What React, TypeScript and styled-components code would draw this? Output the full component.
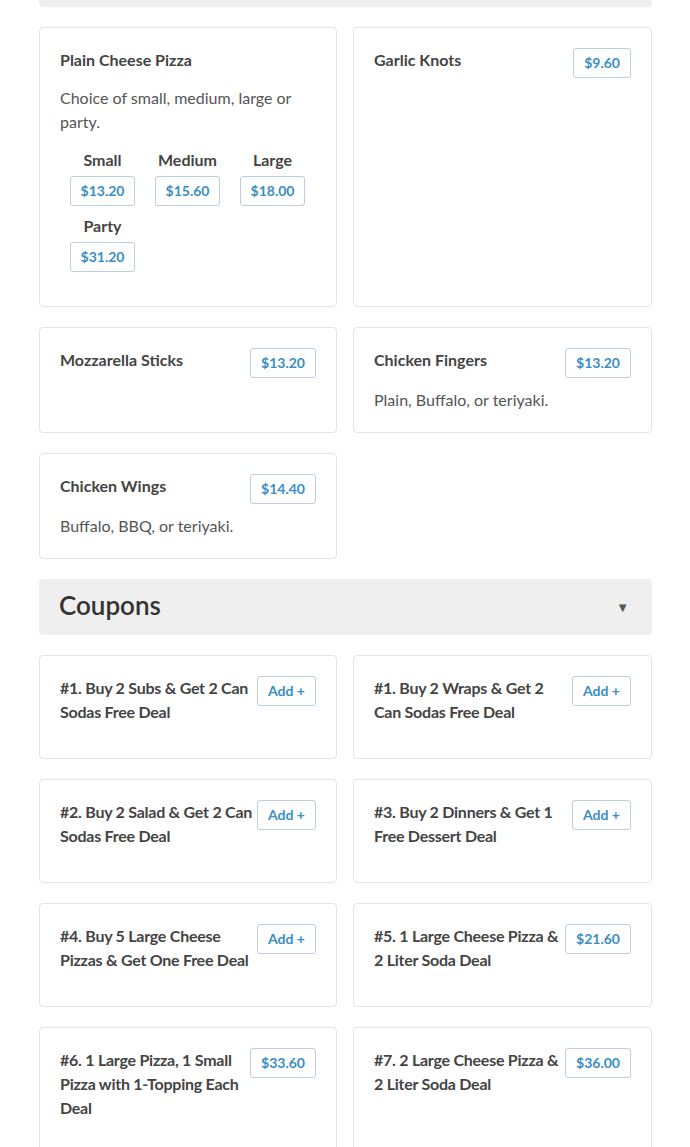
import React from "react";
import styled, { createGlobalStyle } from "styled-components";

const Global = createGlobalStyle`
  html, body { margin: 0; padding: 0; background: #fff; }
  body { font-family: Lato, "Open Sans", "Liberation Sans", sans-serif; color: #444; }
  * { box-sizing: border-box; }
`;

const Page = styled.div`
  padding: 0 38px 0 39px;
  margin-top: -49px;
`;

const Section = styled.section`
  margin-bottom: 20px;
`;

const SectionHeader = styled.div`
  display: flex;
  align-items: center;
  justify-content: space-between;
  height: 56px;
  padding: 0 23px 0 20px;
  background: #efefef;
  border-radius: 4px;
  margin-bottom: 20px;
`;

const SectionTitle = styled.h2`
  margin: 0 0 4px;
  font-size: 26px;
  font-weight: 600;
  color: #333;
  line-height: 30px;
`;

const Caret = styled.span`
  font-size: 13px;
  color: #555;
  line-height: 1;
`;

const Grid = styled.div`
  display: grid;
  grid-template-columns: 298px 299px;
  column-gap: 16px;
  row-gap: 20px;
`;

const Card = styled.div`
  border: 1px solid #e4e4e4;
  border-radius: 4px;
  padding: 20px;
  background: #fff;
`;

const CardHead = styled.div`
  display: flex;
  align-items: flex-start;
  justify-content: space-between;
  gap: 1px;
`;

const ItemTitle = styled.h3<{ $tight?: boolean }>`
  margin: 0 0 14px;
  font-size: 16px;
  font-weight: 700;
  line-height: 24px;
  color: #444;
  flex: 1;
  letter-spacing: ${(p) => (p.$tight ? "-0.25px" : "0")};
`;

const PriceButton = styled.button`
  flex: none;
  height: 30px;
  padding: 0 10px;
  margin: 0 0 10px;
  border: 1px solid #b9cfdd;
  border-radius: 3px;
  background: #fff;
  color: #3a8ec5;
  font-family: Lato, "Open Sans", "Liberation Sans", sans-serif;
  font-size: 14px;
  font-weight: 700;
  line-height: 28px;
  cursor: pointer;
`;

const Description = styled.p`
  margin: 0;
  font-size: 16px;
  line-height: 24px;
  color: #555;
`;

const Sizes = styled.div`
  display: flex;
  flex-wrap: wrap;
  row-gap: 8px;
  margin-top: 14px;
  padding-bottom: 14px;
`;

const SizeOption = styled.div`
  width: 85px;
  display: flex;
  flex-direction: column;
  align-items: center;
  gap: 4px;
`;

const SizeLabel = styled.span`
  font-size: 16px;
  font-weight: 700;
  line-height: 24px;
  color: #444;
`;

const SizeButton = styled(PriceButton)`
  margin: 0;
`;

type Item = { title: string; price?: string; desc?: string; sizes?: [string, string][] };

const menuItems: Item[] = [
  {
    title: "Plain Cheese Pizza",
    desc: "Choice of small, medium, large or party.",
    sizes: [
      ["Small", "$13.20"],
      ["Medium", "$15.60"],
      ["Large", "$18.00"],
      ["Party", "$31.20"],
    ],
  },
  { title: "Garlic Knots", price: "$9.60" },
  { title: "Mozzarella Sticks", price: "$13.20" },
  { title: "Chicken Fingers", price: "$13.20", desc: "Plain, Buffalo, or teriyaki." },
  { title: "Chicken Wings", price: "$14.40", desc: "Buffalo, BBQ, or teriyaki." },
];

const coupons: Item[] = [
  { title: "#1. Buy 2 Subs & Get 2 Can Sodas Free Deal", price: "Add +" },
  { title: "#1. Buy 2 Wraps & Get 2 Can Sodas Free Deal", price: "Add +" },
  { title: "#2. Buy 2 Salad & Get 2 Can Sodas Free Deal", price: "Add +" },
  { title: "#3. Buy 2 Dinners & Get 1 Free Dessert Deal", price: "Add +" },
  { title: "#4. Buy 5 Large Cheese Pizzas & Get One Free Deal", price: "Add +" },
  { title: "#5. 1 Large Cheese Pizza & 2 Liter Soda Deal", price: "$21.60" },
  { title: "#6. 1 Large Pizza, 1 Small Pizza with 1-Topping Each Deal", price: "$33.60" },
  { title: "#7. 2 Large Cheese Pizza & 2 Liter Soda Deal", price: "$36.00" },
];

function ItemCard({ item, tight }: { item: Item; tight?: boolean }) {
  return (
    <Card>
      <CardHead>
        <ItemTitle $tight={tight}>{item.title}</ItemTitle>
        {item.price && <PriceButton>{item.price}</PriceButton>}
      </CardHead>
      {item.desc && <Description>{item.desc}</Description>}
      {item.sizes && (
        <Sizes>
          {item.sizes.map(([label, price]) => (
            <SizeOption key={label}>
              <SizeLabel>{label}</SizeLabel>
              <SizeButton>{price}</SizeButton>
            </SizeOption>
          ))}
        </Sizes>
      )}
    </Card>
  );
}

function MenuSection({ title, items, tight }: { title?: string; items: Item[]; tight?: boolean }) {
  return (
    <Section>
      <SectionHeader>
        {title && (
          <>
            <SectionTitle>{title}</SectionTitle>
            <Caret>▼</Caret>
          </>
        )}
      </SectionHeader>
      <Grid>
        {items.map((it, i) => (
          <ItemCard key={i} item={it} tight={tight} />
        ))}
      </Grid>
    </Section>
  );
}

export default function App() {
  return (
    <>
      <Global />
      <Page>
        <MenuSection items={menuItems} />
        <MenuSection title="Coupons" items={coupons} tight />
      </Page>
    </>
  );
}
